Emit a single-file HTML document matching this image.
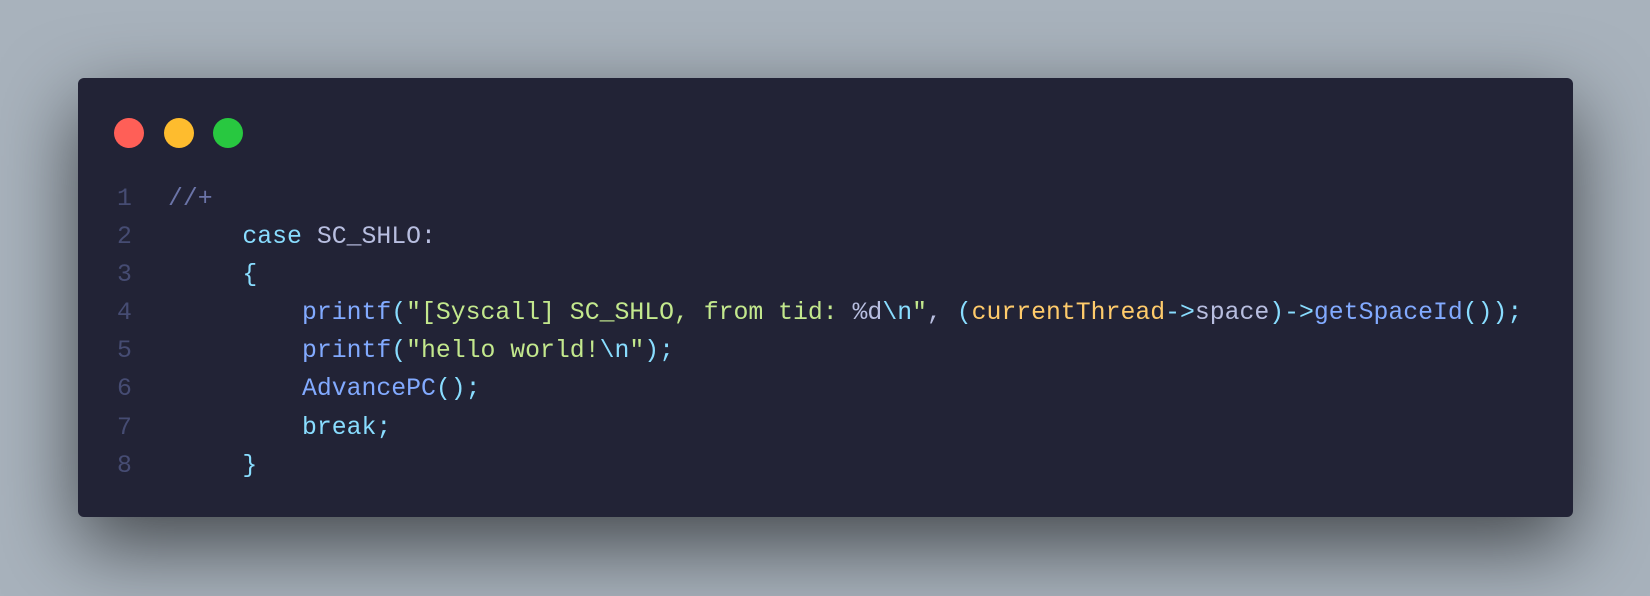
<!DOCTYPE html>
<html><head><style>
html,body{margin:0;padding:0}
body{width:1650px;height:596px;background:#a8b2bc;position:relative;overflow:hidden}
.win{position:absolute;left:78px;top:78px;width:1495px;height:439px;background:#222336;border-radius:6px;box-shadow:0 28px 80px rgba(0,0,0,0.6)}
.dot{position:absolute;top:118px;width:30px;height:30px;border-radius:50%}
pre{position:absolute;left:0;top:180px;margin:0;font-family:"Liberation Mono",monospace;font-size:24.8px;line-height:38.1px;color:#a9b1d6}
.ln{position:absolute;left:117px;top:180px;margin:0;font-family:"Liberation Mono",monospace;font-size:24.8px;line-height:38.1px;color:#464c73}
.c{color:#6b74a8}.k{color:#89ddff}.f{color:#82aaff}.s{color:#c3e88d}.o{color:#ffcb6b}.p{color:#89ddff}.t{color:#b8bee0}
</style></head><body>
<div class="win"></div>
<div class="dot" style="left:114px;background:#ff5f57"></div>
<div class="dot" style="left:164px;background:#febc2e"></div>
<div class="dot" style="left:213px;background:#28c840"></div>
<pre class="ln">1
2
3
4
5
6
7
8</pre>
<pre style="left:168px"><span class="c">//+</span>
     <span class="k">case</span> <span class="t">SC_SHLO:</span>
     <span class="k">{</span>
         <span class="f">printf</span><span class="p">(</span><span class="s">"[Syscall] SC_SHLO, from tid: </span><span class="t">%d</span><span class="k">\n</span><span class="s">"</span><span class="t">,</span> <span class="p">(</span><span class="o">currentThread</span><span class="p">-&gt;</span><span class="t">space</span><span class="p">)-&gt;</span><span class="f">getSpaceId</span><span class="p">());</span>
         <span class="f">printf</span><span class="p">(</span><span class="s">"hello world!</span><span class="k">\n</span><span class="s">"</span><span class="p">);</span>
         <span class="f">AdvancePC</span><span class="p">();</span>
         <span class="k">break</span><span class="p">;</span>
     <span class="k">}</span></pre>
</body></html>
